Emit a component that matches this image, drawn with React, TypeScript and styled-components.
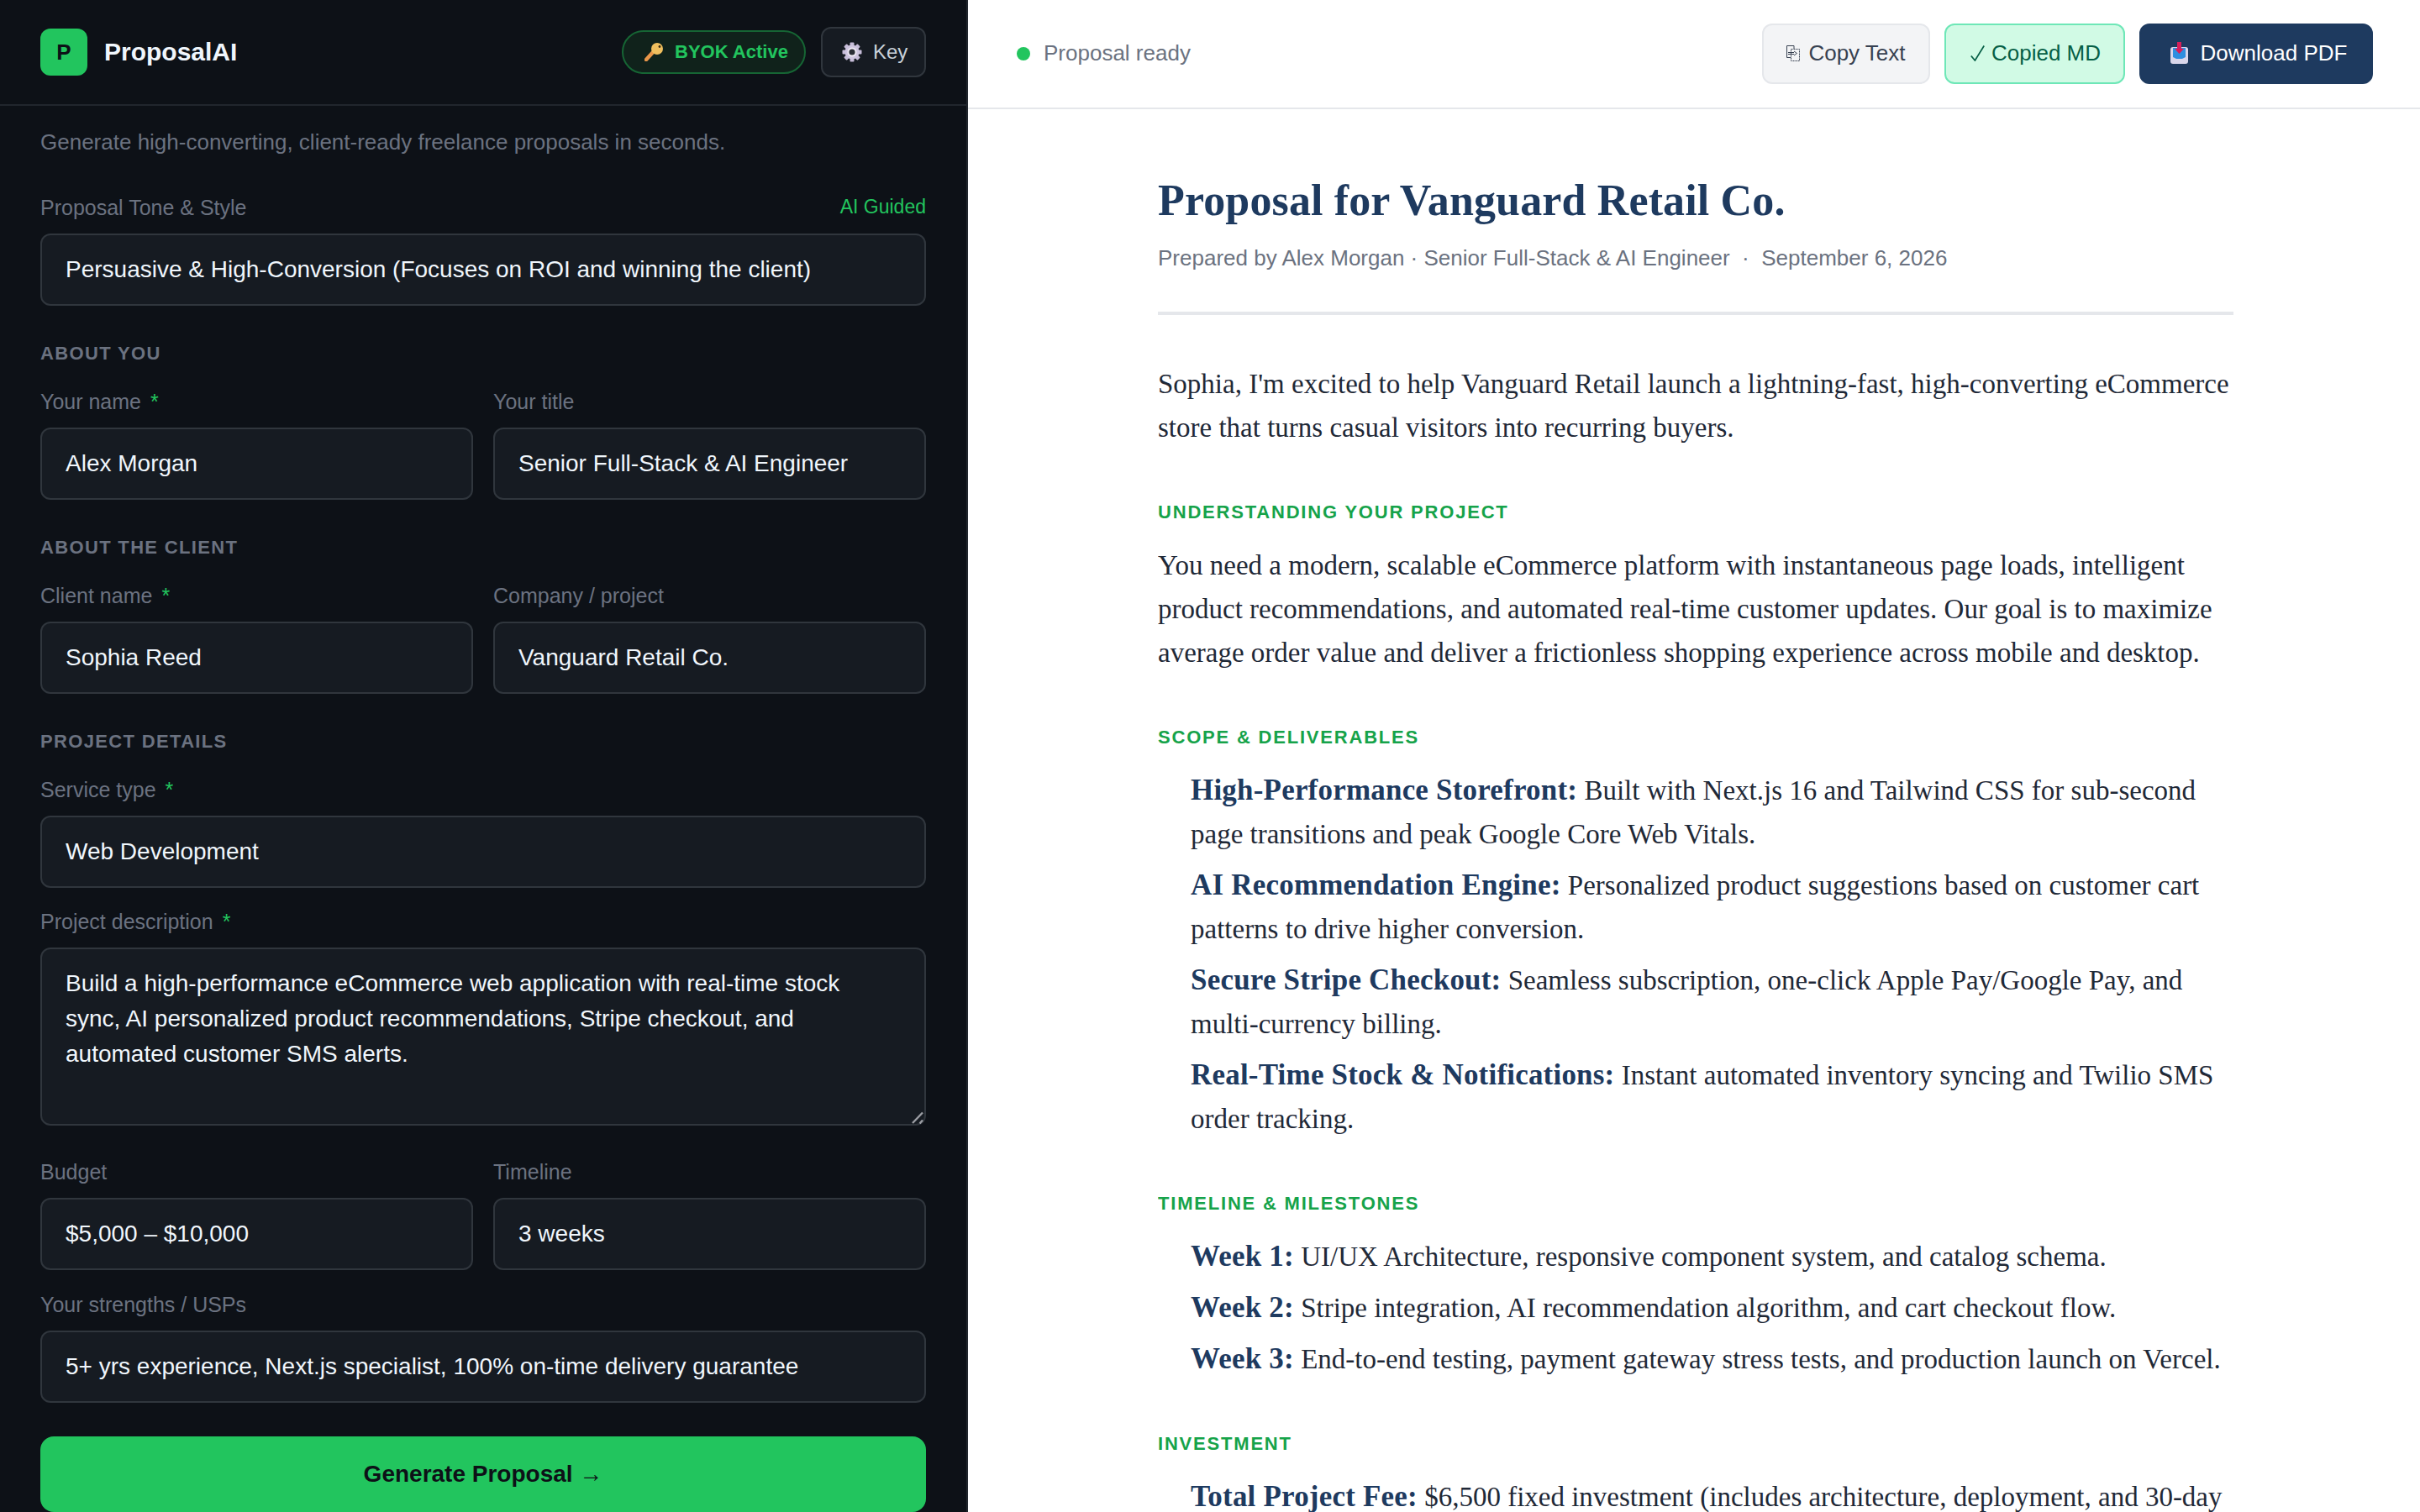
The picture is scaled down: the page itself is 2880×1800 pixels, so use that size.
import React from 'react';
import styled, {createGlobalStyle} from 'styled-components';

const GlobalStyle = createGlobalStyle`
  * {
    box-sizing: border-box;
  }
  html, body {
    margin: 0;
    width: 100%;
    height: 100%;
    overflow: hidden;
  }
  body {
    font-family: 'Liberation Sans', Arial, sans-serif;
  }
`;

const Page = styled.div`
  width: 2880px;
  height: 1800px;
  display: flex;
  overflow: hidden;
`;

const Sidebar = styled.aside`
  width: 1152px;
  height: 1800px;
  flex: none;
  display: flex;
  flex-direction: column;
  overflow: hidden;
  background: #0d1117;
  border-right: 2px solid #21262d;
`;

const SideHeader = styled.header`
  height: 126px;
  flex: none;
  display: flex;
  align-items: center;
  padding: 0 48px;
  border-bottom: 2px solid #21262d;
`;

const Logo = styled.div`
  width: 56px;
  height: 56px;
  display: flex;
  align-items: center;
  justify-content: center;
  border-radius: 12px;
  background: #22c55e;
  color: #0d1117;
  font-size: 26px;
  font-weight: 700;
`;

const Brand = styled.div`
  margin-left: 20px;
  flex: 1;
  color: #f0f6fc;
  font-size: 30px;
  font-weight: 700;
`;

const ByokPill = styled.div`
  width: 219px;
  height: 52px;
  display: flex;
  align-items: center;
  gap: 13px;
  padding-left: 25px;
  border-radius: 26px;
  border: 2px solid #166534;
  background: #10221b;
  color: #22c55e;
  font-size: 22px;
  font-weight: 700;
`;

const KeyButton = styled.button`
  width: 125px;
  height: 60px;
  margin-left: 18px;
  display: flex;
  align-items: center;
  gap: 13px;
  padding: 0 0 0 23px;
  border-radius: 12px;
  border: 2px solid #30363d;
  background: #161b22;
  color: #c9d1d9;
  font-family: inherit;
  font-size: 24px;
`;

const Form = styled.div`
  padding: 25px 48px 0;
  display: flex;
  flex-direction: column;
`;

const Tagline = styled.p`
  margin: 0 0 45px;
  color: #6b7280;
  font-size: 26px;
  line-height: 36px;
`;

const LabelRow = styled.div`
  display: flex;
  align-items: center;
  justify-content: space-between;
  height: 30px;
  margin-bottom: 16px;
`;

const FieldLabel = styled.label`
  color: #6b7280;
  font-size: 25px;
`;

const Required = styled.span`
  margin-left: 11px;
  color: #22c55e;
`;

const Guided = styled.span`
  margin-bottom: 2px;
  color: #22c55e;
  font-size: 23px;
`;

const SectionLabel = styled.div`
  height: 28px;
  margin-top: 43px;
  margin-bottom: 28px;
  color: #6b7280;
  font-size: 22px;
  font-weight: 700;
  line-height: 28px;
  letter-spacing: 1.34px;
`;

const Field = styled.div<{$gap?: number}>`
  margin-top: ${p => p.$gap ?? 0}px;
  min-width: 0;
`;

const TwoColumns = styled.div<{$gap?: number}>`
  display: grid;
  grid-template-columns: 515px 515px;
  column-gap: 24px;
  margin-top: ${p => p.$gap ?? 0}px;
`;

const TextInput = styled.input`
  display: block;
  width: 100%;
  height: 86px;
  padding: 0 28px;
  border-radius: 12px;
  border: 2px solid #30363d;
  background: #161b22;
  color: #f0f6fc;
  font-family: inherit;
  font-size: 28px;
  outline: none;
`;

const TextAreaWrap = styled.div`
  position: relative;
`;

const TextArea = styled.textarea`
  display: block;
  width: 100%;
  height: 212px;
  padding: 20px 28px;
  border-radius: 12px;
  border: 2px solid #30363d;
  background: #161b22;
  color: #f0f6fc;
  font-family: inherit;
  font-size: 28px;
  line-height: 42px;
  outline: none;
  resize: none;
`;

const Grip = styled.svg`
  position: absolute;
  right: 3px;
  bottom: 2px;
  display: block;
`;

const GenerateButton = styled.button`
  flex: none;
  height: 90px;
  margin-top: 40px;
  border: none;
  border-radius: 16px;
  background: #22c55e;
  color: #0d1117;
  font-family: inherit;
  font-size: 28px;
  font-weight: 700;
`;

const Preview = styled.main`
  flex: 1;
  min-width: 0;
  height: 1800px;
  display: flex;
  flex-direction: column;
  background: #fff;
`;

const TopBar = styled.div`
  height: 130px;
  flex: none;
  display: flex;
  align-items: center;
  padding: 0 56px 0 58px;
  border-bottom: 2px solid #e5e7eb;
`;

const StatusDot = styled.span`
  width: 16px;
  height: 16px;
  margin-right: 16px;
  border-radius: 50%;
  background: #22c55e;
`;

const StatusText = styled.span`
  flex: 1;
  padding-bottom: 2px;
  color: #6b7280;
  font-size: 26px;
`;

const tones = {
  plain: {border: '#e5e7eb', bg: '#f3f4f6', fg: '#374151', gap: 10, shift: 0},
  done: {border: '#6ee7b7', bg: '#d1fae5', fg: '#065f46', gap: 8, shift: 2},
  primary: {border: '#1e3a5f', bg: '#1e3a5f', fg: '#ffffff', gap: 15, shift: 6},
};

const ActionButton = styled.button<{$tone: keyof typeof tones; $width: number}>`
  width: ${p => p.$width}px;
  height: 72px;
  margin-left: 17px;
  display: flex;
  align-items: center;
  justify-content: center;
  gap: ${p => tones[p.$tone].gap}px;
  padding: 0 0 2px ${p => tones[p.$tone].shift}px;
  border-radius: 12px;
  font-family: inherit;
  font-size: 26px;
  border: 2px solid ${p => tones[p.$tone].border};
  background: ${p => tones[p.$tone].bg};
  color: ${p => tones[p.$tone].fg};
`;

const Article = styled.article`
  width: 1280px;
  margin-left: 226px;
  padding-top: 78px;
  flex: 1;
  overflow: hidden;
  color: #1f2937;
  font-family: 'Liberation Serif', 'Times New Roman', serif;
  font-size: 33px;
  line-height: 52px;
`;

const Title = styled.h1`
  margin: 0;
  color: #1e3a5f;
  font-size: 52px;
  font-weight: 700;
  line-height: 62px;
  letter-spacing: 0.14px;
`;

const Meta = styled.div`
  margin-top: 19px;
  padding-bottom: 46px;
  border-bottom: 4px solid #e5e7eb;
  color: #6b7280;
  font-family: 'Liberation Sans', Arial, sans-serif;
  font-size: 26px;
  line-height: 36px;
  white-space: pre;
`;

const Intro = styled.p`
  margin: 56px 0 0;
`;

const Heading = styled.h2`
  margin: 61px 0 0;
  color: #16a34a;
  font-family: 'Liberation Sans', Arial, sans-serif;
  font-size: 22px;
  font-weight: 700;
  line-height: 28px;
  letter-spacing: 1.8px;
`;

const Body = styled.p`
  margin: 23px 0 0;
`;

const Items = styled.ul`
  list-style: none;
  margin: 23px 0 2px;
  padding: 0 0 0 39px;
`;

const Item = styled.li`
  & + & {
    margin-top: 9px;
  }
`;

const Strong = styled.strong`
  color: #1e3a5f;
  font-size: 35px;
  font-weight: 700;
  letter-spacing: 0.2px;
`;

const IconBox = styled.svg`
  flex: none;
  display: block;
`;

const KeyIcon = () => (
  <IconBox width="23" height="22" viewBox="0 0 23 22">
    <path d="M2 20 L12 9" stroke="#e8964a" strokeWidth="4.5" strokeLinecap="round" />
    <circle cx="15" cy="7" r="7" fill="#f0bf5e" />
    <circle cx="18" cy="4.5" r="1.4" fill="#3a2a10" />
  </IconBox>
);

const GearIcon = () => {
  const teeth = [0, 45, 90, 135, 180, 225, 270, 315];
  return (
    <IconBox width="24" height="24" viewBox="0 0 24 24">
      {teeth.map(deg => (
        <rect key={deg} x="9.5" y="0.5" width="5" height="6" rx="1" fill="#c6bcd8" transform={`rotate(${deg} 12 12)`} />
      ))}
      <circle cx="12" cy="12" r="8.5" fill="#cfc6e0" />
      <circle cx="12" cy="12" r="5.5" fill="#efeaf5" />
      <circle cx="12" cy="12" r="3.6" fill="#2a2d35" />
    </IconBox>
  );
};

const InboxIcon = () => (
  <IconBox width="21" height="26" viewBox="0 0 21 26">
    <rect x="0" y="6" width="21" height="20" rx="3" fill="#d9d6ea" />
    <path d="M3 7 H18 V18 L14 20 H7 L3 18 Z" fill="#2f8fe0" />
    <path d="M8 0 H13 V8 H16 L10.5 14 L5 8 H8 Z" fill="#d81e5b" />
  </IconBox>
);

const CopyIcon = () => (
  <IconBox width="16" height="19" viewBox="0 0 16 19" fill="none" stroke="#374151">
    <path d="M5 14.5 H0.5 V0.5 H9 V4" strokeWidth="1" />
    <rect x="5.5" y="4.5" width="10" height="14" strokeWidth="1" strokeDasharray="2 1" />
    <path d="M2 8.5 H9 M2 10.5 H9 M9 7 L12.5 9.5 L9 12" strokeWidth="1" />
  </IconBox>
);

const CheckIcon = () => (
  <IconBox width="17" height="19" viewBox="0 0 17 19" fill="none" stroke="#065f46">
    <path d="M0.8 12.5 L5.4 18 L16.2 0.5" strokeWidth="1.7" />
  </IconBox>
);

export default function App() {
  return (
    <Page>
      <GlobalStyle />
      <Sidebar>
        <SideHeader>
          <Logo>P</Logo>
          <Brand>ProposalAI</Brand>
          <ByokPill>
            <KeyIcon />
            BYOK Active
          </ByokPill>
          <KeyButton>
            <GearIcon />
            Key
          </KeyButton>
        </SideHeader>
        <Form>
          <Tagline>Generate high-converting, client-ready freelance proposals in seconds.</Tagline>
          <LabelRow>
            <FieldLabel>Proposal Tone &amp; Style</FieldLabel>
            <Guided>AI Guided</Guided>
          </LabelRow>
          <TextInput readOnly value="Persuasive & High-Conversion (Focuses on ROI and winning the client)" />

          <SectionLabel>ABOUT YOU</SectionLabel>
          <TwoColumns>
            <Field>
              <LabelRow>
                <FieldLabel>Your name<Required>*</Required></FieldLabel>
              </LabelRow>
              <TextInput readOnly value="Alex Morgan" />
            </Field>
            <Field>
              <LabelRow>
                <FieldLabel>Your title</FieldLabel>
              </LabelRow>
              <TextInput readOnly value="Senior Full-Stack & AI Engineer" />
            </Field>
          </TwoColumns>

          <SectionLabel>ABOUT THE CLIENT</SectionLabel>
          <TwoColumns>
            <Field>
              <LabelRow>
                <FieldLabel>Client name<Required>*</Required></FieldLabel>
              </LabelRow>
              <TextInput readOnly value="Sophia Reed" />
            </Field>
            <Field>
              <LabelRow>
                <FieldLabel>Company / project</FieldLabel>
              </LabelRow>
              <TextInput readOnly value="Vanguard Retail Co." />
            </Field>
          </TwoColumns>

          <SectionLabel>PROJECT DETAILS</SectionLabel>
          <Field>
            <LabelRow>
              <FieldLabel>Service type<Required>*</Required></FieldLabel>
            </LabelRow>
            <TextInput readOnly value="Web Development" />
          </Field>
          <Field $gap={25}>
            <LabelRow>
              <FieldLabel>Project description<Required>*</Required></FieldLabel>
            </LabelRow>
            <TextAreaWrap>
              <TextArea
                readOnly
                value="Build a high-performance eCommerce web application with real-time stock sync, AI personalized product recommendations, Stripe checkout, and automated customer SMS alerts."
              />
              <Grip width="14" height="15" viewBox="0 0 14 15" stroke="#9b9da3" strokeWidth="2.4">
                <path d="M1 14 L13 1.5 M9.5 14.5 L13 10.5" />
              </Grip>
            </TextAreaWrap>
          </Field>
          <TwoColumns $gap={40}>
            <Field>
              <LabelRow>
                <FieldLabel>Budget</FieldLabel>
              </LabelRow>
              <TextInput readOnly value="$5,000 – $10,000" />
            </Field>
            <Field>
              <LabelRow>
                <FieldLabel>Timeline</FieldLabel>
              </LabelRow>
              <TextInput readOnly value="3 weeks" />
            </Field>
          </TwoColumns>
          <Field $gap={26}>
            <LabelRow>
              <FieldLabel>Your strengths / USPs</FieldLabel>
            </LabelRow>
            <TextInput readOnly value="5+ yrs experience, Next.js specialist, 100% on-time delivery guarantee" />
          </Field>
          <GenerateButton>Generate Proposal →</GenerateButton>
        </Form>
      </Sidebar>

      <Preview>
        <TopBar>
          <StatusDot />
          <StatusText>Proposal ready</StatusText>
          <ActionButton $tone="plain" $width={200}>
            <CopyIcon />
            Copy Text
          </ActionButton>
          <ActionButton $tone="done" $width={215}>
            <CheckIcon />
            Copied MD
          </ActionButton>
          <ActionButton $tone="primary" $width={278}>
            <InboxIcon />
            Download PDF
          </ActionButton>
        </TopBar>
        <Article>
          <Title>Proposal for Vanguard Retail Co.</Title>
          <Meta>Prepared by Alex Morgan · Senior Full-Stack &amp; AI Engineer  ·  September 6, 2026</Meta>
          <Intro>
            Sophia, I'm excited to help Vanguard Retail launch a lightning-fast, high-converting eCommerce
            store that turns casual visitors into recurring buyers.
          </Intro>
          <Heading>UNDERSTANDING YOUR PROJECT</Heading>
          <Body>
            You need a modern, scalable eCommerce platform with instantaneous page loads, intelligent
            product recommendations, and automated real-time customer updates. Our goal is to maximize
            average order value and deliver a frictionless shopping experience across mobile and desktop.
          </Body>
          <Heading>SCOPE &amp; DELIVERABLES</Heading>
          <Items>
            <Item>
              <Strong>High-Performance Storefront:</Strong> Built with Next.js 16 and Tailwind CSS for
              sub-second page transitions and peak Google Core Web Vitals.
            </Item>
            <Item>
              <Strong>AI Recommendation Engine:</Strong> Personalized product suggestions based on customer
              cart patterns to drive higher conversion.
            </Item>
            <Item>
              <Strong>Secure Stripe Checkout:</Strong> Seamless subscription, one-click Apple Pay/Google Pay,
              and multi-currency billing.
            </Item>
            <Item>
              <Strong>Real-Time Stock &amp; Notifications:</Strong> Instant automated inventory syncing and
              Twilio SMS order tracking.
            </Item>
          </Items>
          <Heading>TIMELINE &amp; MILESTONES</Heading>
          <Items>
            <Item><Strong>Week 1:</Strong> UI/UX Architecture, responsive component system, and catalog schema.</Item>
            <Item><Strong>Week 2:</Strong> Stripe integration, AI recommendation algorithm, and cart checkout flow.</Item>
            <Item><Strong>Week 3:</Strong> End-to-end testing, payment gateway stress tests, and production launch on Vercel.</Item>
          </Items>
          <Heading>INVESTMENT</Heading>
          <Items>
            <Item>
              <Strong>Total Project Fee:</Strong> $6,500 fixed investment (includes architecture, deployment,
              and 30-day post-launch support).
            </Item>
          </Items>
        </Article>
      </Preview>
    </Page>
  );
}
